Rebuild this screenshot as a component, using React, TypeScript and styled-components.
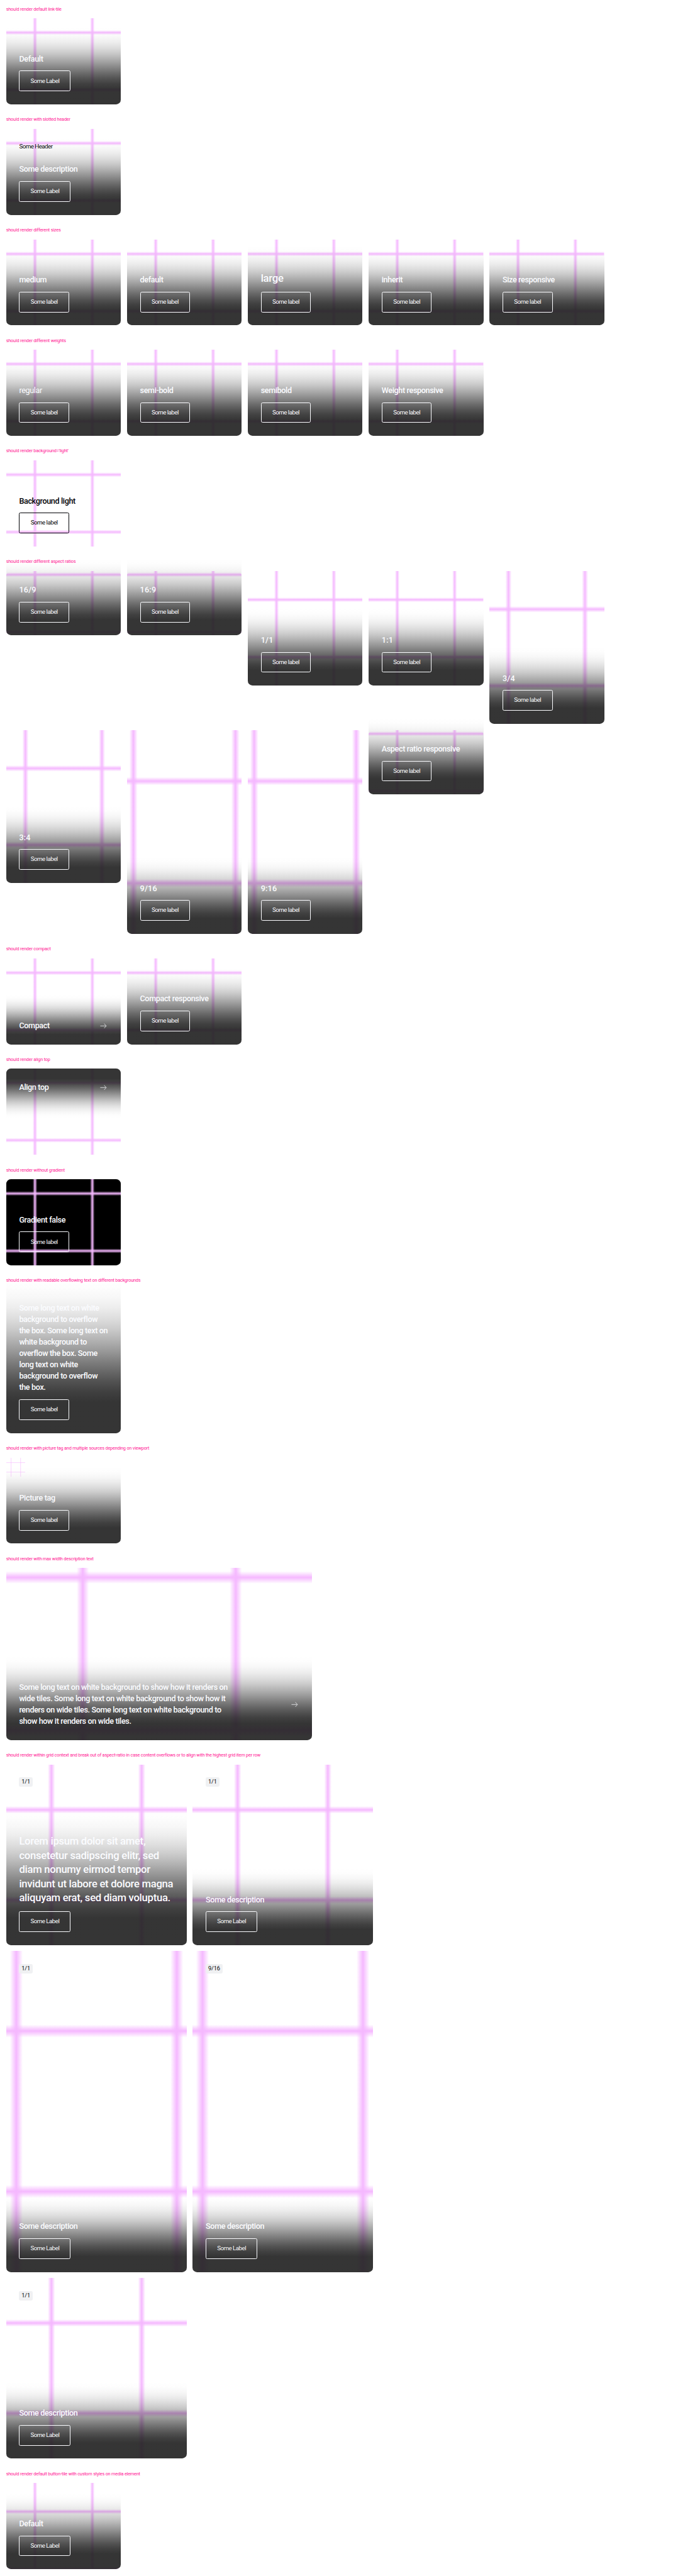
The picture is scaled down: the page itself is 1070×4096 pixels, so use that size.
import React from 'react';
import styled, { createGlobalStyle, css } from 'styled-components';

const SCALE = 0.60807;
const u = (n: number) => `${+(n * SCALE).toFixed(3)}px`;

const GlobalStyle = createGlobalStyle`
  body { margin: 0; background: #fff; }
  *, *::before, *::after { box-sizing: border-box; }
`;

const Page = styled.main`
  width: ${u(1760)};
  height: 4096px;
  overflow: hidden;
  background: #fff;
  color: #010205;
  font-family: Roboto, 'Liberation Sans', sans-serif;
  letter-spacing: -0.032em;
`;

const Section = styled.section`
  display: flex;
  flex-direction: column;
  gap: ${u(16)};
  padding: ${u(16)};
`;

const Caption = styled.h2`
  margin: 0;
  height: ${u(16)};
  font-size: ${u(12)};
  line-height: ${u(16)};
  font-weight: 400;
  letter-spacing: -0.025em;
  color: #ff1493;
  white-space: nowrap;
`;

const Row = styled.div`
  display: flex;
  flex-wrap: wrap;
  align-items: flex-start;
  gap: ${u(16)};
`;

const Grid = styled.div`
  display: grid;
  grid-template-columns: ${u(472)} ${u(472)};
  gap: ${u(16)};
`;

const Card = styled.article<{ $w: number; $h: number; $fill?: string }>`
  display: grid;
  width: ${p => u(p.$w)};
  height: ${p => u(p.$h)};
  grid-template: ${p => u(p.$h)} / 100%;
  border-radius: ${u(12)};
  background: ${p => p.$fill ?? 'transparent'};
  > * { grid-area: 1 / 1; }
`;

const stops = (a: number) =>
  `rgba(245,184,255,0) ${a - 2}%, #f5b8ff ${a}%, rgba(245,184,255,0) ${a + 2}%`;
const mesh = `${stops(25)}, ${stops(75)}`;

const Media = styled.div<{ $side: number; $pos: string }>`
  border-radius: ${u(12)};
  background-image: linear-gradient(90deg, ${mesh}), linear-gradient(180deg, ${mesh});
  background-size: ${p => u(p.$side)} ${p => u(p.$side)};
  background-position: ${p => p.$pos};
  background-repeat: no-repeat;
`;

const shade: [number, number][] = [
  [0.9, 0], [0.9, 20], [0.852589, 26.67], [0.768225, 33.33], [0.668116, 40],
  [0.557309, 46.67], [0.442691, 53.33], [0.331884, 60], [0.231775, 66.67],
  [0.147411, 73.33], [0.0816599, 80], [0.03551, 86.67], [0.0086472, 93.33], [0, 100],
];
const shadeStops = shade.map(([a, s]) => `rgba(31,31,31,${a}) ${s}%`).join(', ');

const Content = styled.div<{ $top?: boolean; $compact?: boolean; $gradient: boolean }>`
  align-self: ${p => (p.$top ? 'start' : 'end')};
  display: flex;
  flex-direction: ${p => (p.$compact ? 'row' : 'column')};
  align-items: ${p => (p.$compact ? 'center' : 'flex-start')};
  justify-content: space-between;
  gap: ${u(16)};
  padding: ${p => (p.$top ? `${u(34)} ${u(34)} ${u(68)}` : `${u(68)} ${u(34)} ${u(34)}`)};
  border-radius: ${p => (p.$top ? `${u(12)} ${u(12)} 0 0` : `0 0 ${u(12)} ${u(12)}`)};
  ${p => p.$gradient && css`
    background: linear-gradient(${p.$top ? 'to bottom' : 'to top'}, ${shadeStops});
  `}
`;

const tracking = (large?: boolean, numeric?: boolean) =>
  numeric ? '0.02em' : large ? '-0.017em' : '-0.028em';

const Heading = styled.p<{ $large?: boolean; $regular?: boolean; $dark?: boolean; $numeric?: boolean }>`
  margin: 0;
  font-size: ${p => u(p.$large ? 27.4 : 20.7)};
  line-height: ${p => u(p.$large ? 37 : 29.6)};
  font-weight: ${p => (p.$regular ? 400 : 500)};
  letter-spacing: ${p => tracking(p.$large, p.$numeric)};
  color: ${p => (p.$dark ? '#010205' : '#fbfcff')};
`;

const Line = styled.span`
  display: block;
  white-space: nowrap;
`;

const Action = styled.span<{ $dark?: boolean; $wide?: boolean }>`
  display: flex;
  align-items: center;
  justify-content: center;
  width: ${p => u(p.$wide ? 135 : 131)};
  height: ${u(54)};
  border: 1.216px solid ${p => (p.$dark ? '#010205' : '#fbfcff')};
  border-radius: ${u(4)};
  color: ${p => (p.$dark ? '#010205' : '#fbfcff')};
  font-size: ${u(16)};
  line-height: ${u(24)};
  white-space: nowrap;
`;

const Header = styled.div`
  align-self: start;
  padding: ${u(34)} ${u(34)} 0;
  font-size: ${u(16)};
  line-height: ${u(24)};
  z-index: 1;
`;

const Tag = styled.span`
  display: inline-block;
  padding: 0 ${u(6.2)};
  height: ${u(24)};
  border-radius: ${u(4)};
  background: rgba(238, 239, 242, 0.9);
  font-size: ${u(15)};
  letter-spacing: 0;
  line-height: ${u(24)};
  vertical-align: top;
`;

const Arrow = styled.svg`
  flex: none;
  width: ${u(24)};
  height: ${u(24)};
`;

const Thumb = styled.svg`
  width: ${u(50)};
  height: ${u(50)};
`;

type TileProps = {
  text: string | string[];
  label?: string;
  w?: number;
  h?: number;
  fill?: string;
  media?: 'cover' | 'top' | 'thumb' | 'none';
  large?: boolean;
  regular?: boolean;
  light?: boolean;
  compact?: boolean;
  top?: boolean;
  gradient?: boolean;
  header?: string;
  tag?: string;
};

function Tile({
  text, label = 'Some label', w = 300, h = 225, fill, media = 'cover', large, regular,
  light, compact, top, gradient = true, header, tag,
}: TileProps) {
  const lines = Array.isArray(text) ? text : [text];
  return (
    <Card $w={w} $h={h} $fill={fill}>
      {(media === 'cover' || media === 'top') && (
        <Media $side={Math.max(w, h)} $pos={media === 'top' ? 'center top' : 'center'} />
      )}
      {media === 'thumb' && (
        <Thumb viewBox="0 0 50 50" stroke="#f5b8ff" strokeWidth="1">
          <path d="M12.5 0V50M37.5 0V50M0 12.5H50M0 37.5H50" />
        </Thumb>
      )}
      {(header || tag) && <Header>{header}{tag && <Tag>{tag}</Tag>}</Header>}
      <Content $top={top} $compact={compact} $gradient={gradient && !light}>
        <Heading $large={large} $regular={regular} $dark={light} $numeric={/^\d/.test(lines[0])}>
          {lines.map((l, i) => <Line key={i}>{l}</Line>)}
        </Heading>
        {compact ? (
          <Arrow viewBox="0 0 24 24" fill="none" stroke="#fbfcff" strokeWidth="1.2">
            <path d="M4 12H19M14.2 6L19.6 12L14.2 18" />
          </Arrow>
        ) : (
          <Action $dark={light} $wide={label === 'Some Label'}>{label}</Action>
        )}
      </Content>
    </Card>
  );
}

function Block({ title, children }: { title: string; children: React.ReactNode }) {
  return (
    <Section>
      <Caption>{title}</Caption>
      {children}
    </Section>
  );
}

export default function App() {
  return (
    <>
      <GlobalStyle />
      <Page>
        <Block title="should render default link-tile">
          <Row><Tile text="Default" label="Some Label" /></Row>
        </Block>
        <Block title="should render with slotted header">
          <Row><Tile text="Some description" label="Some Label" header="Some Header" /></Row>
        </Block>
        <Block title="should render different sizes">
          <Row>
            <Tile text="medium" />
            <Tile text="default" />
            <Tile text="large" large />
            <Tile text="inherit" />
            <Tile text="Size responsive" />
          </Row>
        </Block>
        <Block title="should render different weights">
          <Row>
            <Tile text="regular" regular />
            <Tile text="semi-bold" />
            <Tile text="semibold" />
            <Tile text="Weight responsive" />
          </Row>
        </Block>
        <Block title="should render background='light'">
          <Row><Tile text="Background light" light /></Row>
        </Block>
        <Block title="should render different aspect ratios">
          <Row>
            <Tile text="16/9" h={168.75} />
            <Tile text="16:9" h={168.75} />
            <Tile text="1/1" h={300} />
            <Tile text="1:1" h={300} />
            <Tile text="3/4" h={400} />
            <Tile text="3:4" h={400} />
            <Tile text="9/16" h={533.33} />
            <Tile text="9:16" h={533.33} />
            <Tile text="Aspect ratio responsive" h={168.75} />
          </Row>
        </Block>
        <Block title="should render compact">
          <Row>
            <Tile text="Compact" compact />
            <Tile text="Compact responsive" />
          </Row>
        </Block>
        <Block title="should render align top">
          <Row><Tile text="Align top" compact top /></Row>
        </Block>
        <Block title="should render without gradient">
          <Row><Tile text="Gradient false" gradient={false} fill="#000" /></Row>
        </Block>
        <Block title="should render with readable overflowing text on different backgrounds">
          <Row>
            <Tile
              h={374.8}
              media="none"
              text={[
                'Some long text on white', 'background to overflow', 'the box. Some long text on',
                'white background to', 'overflow the box. Some', 'long text on white',
                'background to overflow', 'the box.',
              ]}
            />
          </Row>
        </Block>
        <Block title="should render with picture tag and multiple sources depending on viewport">
          <Row><Tile text="Picture tag" media="thumb" /></Row>
        </Block>
        <Block title="should render with max width description text">
          <Row>
            <Tile
              w={800}
              h={450}
              compact
              text={[
                'Some long text on white background to show how it renders on',
                'wide tiles. Some long text on white background to show how it',
                'renders on wide tiles. Some long text on white background to',
                'show how it renders on wide tiles.',
              ]}
            />
          </Row>
        </Block>
        <Block title="should render within grid context and break out of aspect-ratio in case content overflows or to align with the highest grid item per row">
          <Grid>
            <Tile
              w={472}
              h={472}
              large
              label="Some Label"
              tag="1/1"
              text={[
                'Lorem ipsum dolor sit amet,', 'consetetur sadipscing elitr, sed',
                'diam nonumy eirmod tempor', 'invidunt ut labore et dolore magna',
                'aliquyam erat, sed diam voluptua.',
              ]}
            />
            <Tile w={472} h={472} text="Some description" label="Some Label" tag="1/1" />
            <Tile w={472} h={839.1} text="Some description" label="Some Label" tag="1/1" />
            <Tile w={472} h={839.1} text="Some description" label="Some Label" tag="9/16" />
            <Tile w={472} h={472} text="Some description" label="Some Label" tag="1/1" />
          </Grid>
        </Block>
        <Block title="should render default button-tile with custom styles on media element">
          <Row><Tile text="Default" label="Some Label" media="top" /></Row>
        </Block>
      </Page>
    </>
  );
}
